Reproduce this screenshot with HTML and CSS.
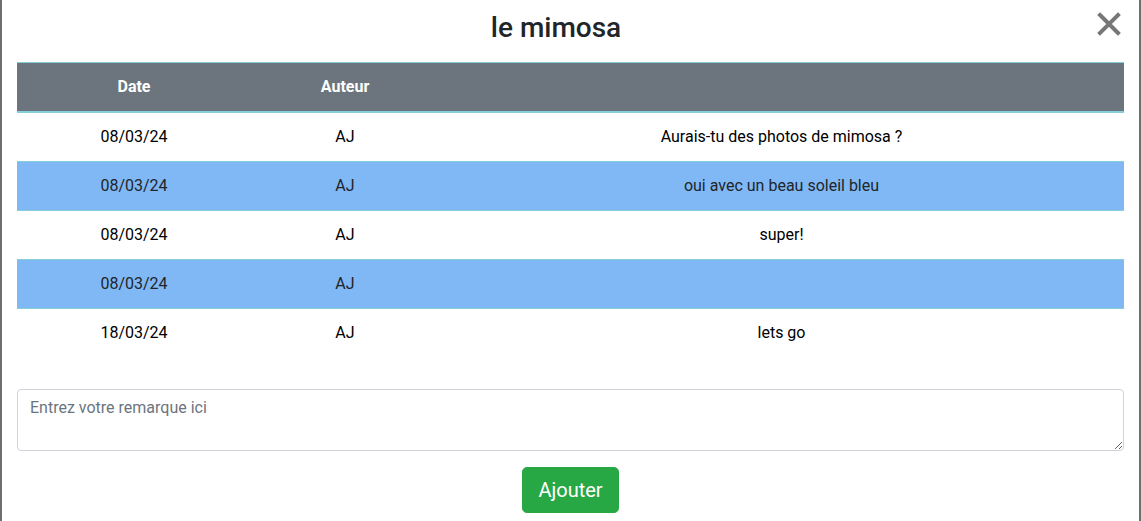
FILE: index.html
```html
<!DOCTYPE html>
<html lang="fr">
<head>
<meta charset="utf-8">
<title>le mimosa</title>
<link rel="stylesheet" href="styles.css">
</head>
<body>
<div class="frame">
  <div class="modal-header">
    <h1 class="title">le mimosa</h1>
    <button class="close" aria-label="Fermer">
      <svg width="24" height="24" viewBox="0 0 24 24"><path d="M3 3 L21 21 M21 3 L3 21" stroke="#777" stroke-width="4" stroke-linecap="square" fill="none"/></svg>
    </button>
  </div>
  <table class="comments">
    <colgroup><col class="c-date"><col class="c-author"><col class="c-msg"></colgroup>
    <thead>
      <tr><th>Date</th><th>Auteur</th><th></th></tr>
    </thead>
    <tbody>
      <tr><td>08/03/24</td><td>AJ</td><td>Aurais-tu des photos de mimosa ?</td></tr>
      <tr class="alt"><td>08/03/24</td><td>AJ</td><td>oui avec un beau soleil bleu</td></tr>
      <tr><td>08/03/24</td><td>AJ</td><td>super!</td></tr>
      <tr class="alt"><td>08/03/24</td><td>AJ</td><td></td></tr>
      <tr><td>18/03/24</td><td>AJ</td><td>lets go</td></tr>
    </tbody>
  </table>
  <textarea class="remark" rows="2" placeholder="Entrez votre remarque ici"></textarea>
  <div class="actions">
    <button class="btn-add">Ajouter</button>
  </div>
</div>
</body>
</html>
```
FILE: styles.css
```css
* { box-sizing: border-box; }
html, body { margin: 0; padding: 0; background: #fff; }
body { font-family: Roboto, "Liberation Sans", sans-serif; color: #212529; }
.frame {
  width: 1141px;
  height: 521px;
  border-left: 2px solid #6f6f6f;
  border-right: 2px solid #6f6f6f;
  padding: 0 15px;
  overflow: hidden;
}
.modal-header {
  display: flex;
  align-items: flex-start;
  height: 62px;
  padding-top: 11px;
}
.title {
  flex: 1;
  margin: 0;
  text-align: center;
  font-size: 28px;
  font-weight: 500;
  line-height: 34px;
  color: #212529;
}
.close {
  width: 29px;
  padding: 0 0 0 2px;
  margin-top: 1px;
  border: 0;
  background: none;
  display: flex;
  cursor: pointer;
}
.comments {
  width: 100%;
  border-collapse: collapse;
  table-layout: fixed;
}
.c-date { width: 234px; }
.c-author { width: 188px; }
.comments th {
  background: #6c757d;
  color: #fff;
  font-weight: 700;
  font-size: 16px;
  line-height: 24px;
  padding: 12px;
  text-align: center;
  border-top: 1px solid #86cfda;
  border-bottom: 2px solid #86cfda;
}
.comments td {
  padding: 12px;
  font-size: 16px;
  line-height: 24px;
  text-align: center;
  color: #000;
  border-top: 1px solid #86cfda;
}
.comments tbody tr:first-child td { border-top: 0; }
.comments tr.alt td { background: #80b8f6; color: #212529; }
.remark {
  display: block;
  width: 100%;
  margin-top: 32px;
  padding: 6px 12px;
  border: 1px solid #ced4da;
  border-radius: 4px;
  font-family: Roboto, "Liberation Sans", sans-serif;
  font-size: 16px;
  line-height: 24px;
  color: #495057;
  height: 62px;
}
.remark::placeholder { color: #6c757d; }
.actions {
  display: flex;
  justify-content: center;
  margin-top: 16px;
}
.btn-add {
  background: #28a745;
  color: #fff;
  border: 1px solid #28a745;
  border-radius: 4.8px;
  padding: 7px 15px;
  font-family: Roboto, "Liberation Sans", sans-serif;
  font-size: 20px;
  line-height: 30px;
  height: 46px;
}
```
